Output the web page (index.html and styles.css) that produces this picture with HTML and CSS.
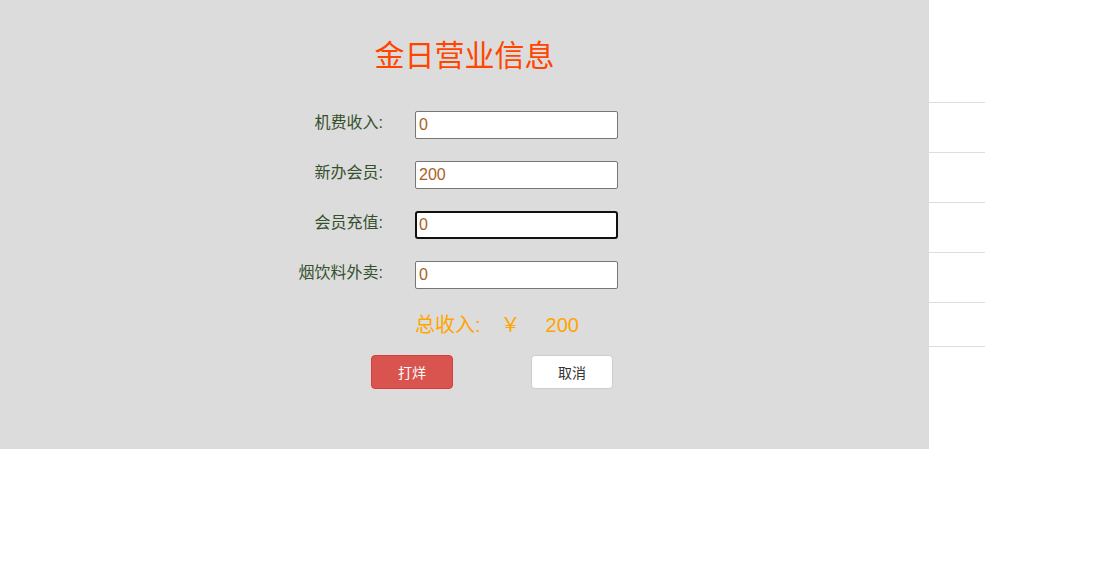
FILE: index.html
```html
<!DOCTYPE html>
<html lang="zh-CN">
<head>
    <meta charset="UTF-8">
    <meta name="viewport" content="width=device-width, initial-scale=1.0">
    <title>金日营业信息</title>
    <link rel="stylesheet" href="styles.css">
</head>
<body>
    <div class="list">
        <div class="list-row"></div>
        <div class="list-row"></div>
        <div class="list-row"></div>
        <div class="list-row"></div>
        <div class="list-row last"></div>
    </div>

    <div class="overlay">
        <h1>金日营业信息</h1>

        <div class="form">
            <label for="fee">机费收入:</label>
            <input type="text" id="fee" value="0">

            <label for="member">新办会员:</label>
            <input type="text" id="member" value="200">

            <label for="recharge">会员充值:</label>
            <input type="text" id="recharge" class="focused" value="0">

            <label for="drinks">烟饮料外卖:</label>
            <input type="text" id="drinks" value="0">
        </div>

        <div class="total">
            <span>总收入:</span>
            <span class="yen">￥</span>
            <span class="sum">200</span>
        </div>

        <div class="actions">
            <button class="btn btn-danger">打烊</button>
            <button class="btn btn-default">取消</button>
        </div>
    </div>
</body>
</html>
```

FILE: styles.css
```css
body {
    margin: 8px;
    font-family: "Liberation Sans", "Noto Sans CJK SC", sans-serif;
    background-color: #fff;
}

/* table behind the dialog */
.list {
    width: 977px;
    margin-top: 94px;
}

.list-row {
    height: 49px;
    border-top: 1px solid #ddd;
}

.list-row.last {
    height: 43px;
    border-bottom: 1px solid #ddd;
}

.overlay {
    position: absolute;
    top: 0;
    left: 0;
    width: 929px;
    height: 449px;
    background-color: #dcdcdc;
    box-sizing: border-box;
    padding-top: 34px;
}

h1 {
    margin: 0;
    text-align: center;
    font-size: 30px;
    font-weight: normal;
    line-height: 44px;
    color: #ff4500;
}

.form {
    display: grid;
    grid-template-columns: 130px 203px;
    column-gap: 32px;
    row-gap: 22px;
    margin: 33px 0 0 253px;
}

.form label {
    text-align: right;
    font-size: 16px;
    line-height: 20px;
    padding-top: 2px;
    color: #35502c;
}

.form input {
    box-sizing: border-box;
    width: 203px;
    height: 28px;
    margin: 0;
    padding: 0 3px;
    border: 1px solid #767676;
    border-radius: 2px;
    font-family: "Liberation Sans", "Noto Sans CJK SC", sans-serif;
    font-size: 16px;
    color: #a8621f;
    background-color: #fff;
    outline: none;
}

.form input.focused {
    border: 2px solid #101010;
    padding-left: 2px;
    border-radius: 3px;
}

.total {
    display: flex;
    margin: 23px 0 0 415px;
    font-size: 20px;
    line-height: 26px;
    color: #ffa500;
}

.total .yen {
    margin-left: 20px;
}

.total .sum {
    margin-left: 25px;
}

.actions {
    display: flex;
    gap: 78px;
    margin: 17px 0 0 371px;
}

.btn {
    width: 82px;
    height: 34px;
    border-radius: 4px;
    font-family: "Liberation Sans", "Noto Sans CJK SC", sans-serif;
    font-size: 14px;
    cursor: pointer;
}

.btn-danger {
    background-color: #d9534f;
    border: 1px solid #d43f3a;
    color: #fff;
}

.btn-default {
    background-color: #fff;
    border: 1px solid #ccc;
    color: #333;
}
```
